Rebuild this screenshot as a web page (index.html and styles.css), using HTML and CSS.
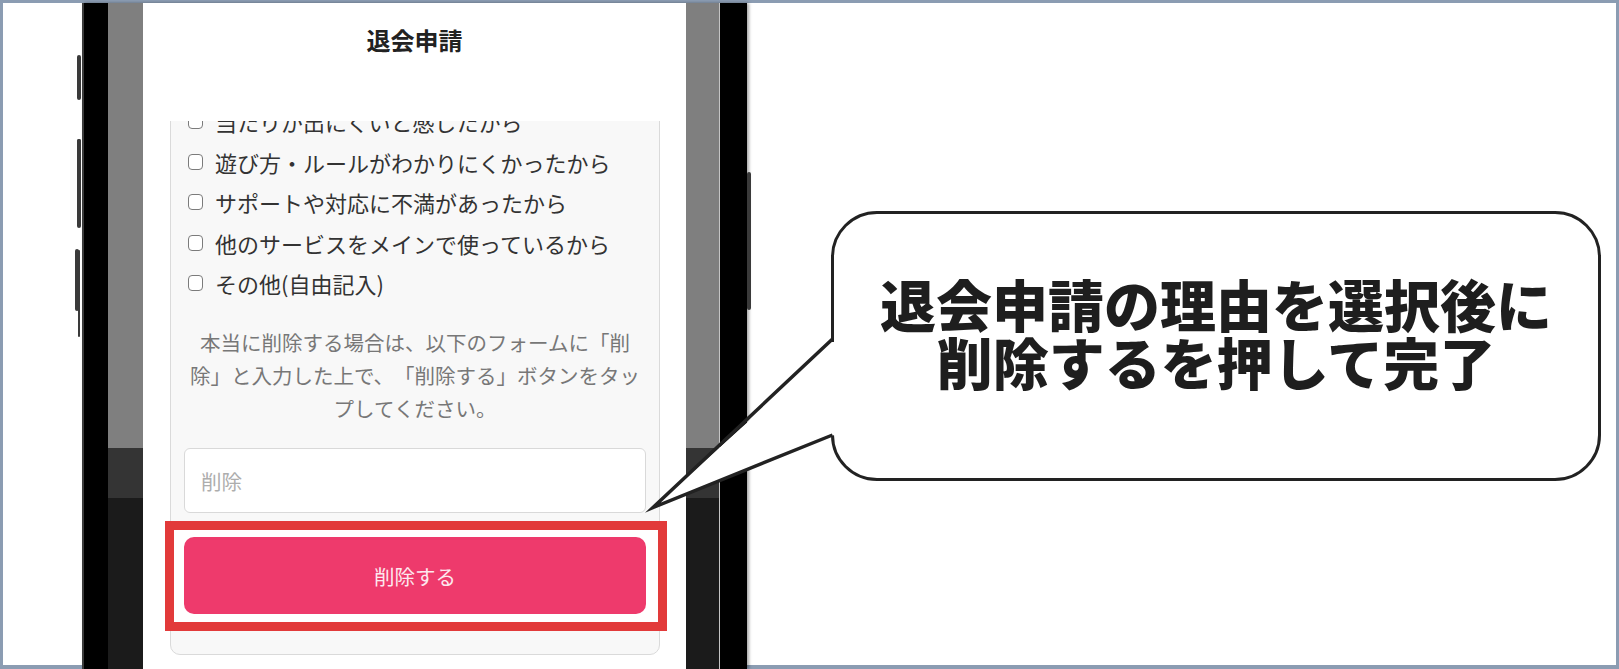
FILE: index.html
```html
<!DOCTYPE html>
<html lang="ja">
<head>
    <meta charset="UTF-8">
    <meta name="viewport" content="width=device-width, initial-scale=1.0">
    <title>退会申請</title>
    <link rel="stylesheet" href="styles.css">
</head>
<body>
    <div class="shot">
        <div class="phone">
            <div class="screen">
                <div class="sheet">
                    <header class="sheet-head">
                        <h1>退会申請</h1>
                    </header>
                    <div class="sheet-body">
                        <div class="card">
                            <ul class="reasons">
                                <li><span class="box"></span>当たりが出にくいと感じたから</li>
                                <li><span class="box"></span>遊び方・ルールがわかりにくかったから</li>
                                <li><span class="box"></span>サポートや対応に不満があったから</li>
                                <li><span class="box"></span>他のサービスをメインで使っているから</li>
                                <li><span class="box"></span>その他(自由記入)</li>
                            </ul>
                            <p class="note">本当に削除する場合は、以下のフォームに「削除」と入力した上で、「削除する」ボタンをタップしてください。</p>
                            <input class="confirm" type="text" placeholder="削除">
                            <div class="highlight">
                                <button class="delete" type="button">削除する</button>
                            </div>
                        </div>
                    </div>
                </div>
            </div>
        </div>

        <div class="callout">
            <div class="bubble">
                <p>退会申請の理由を選択後に<br>削除するを押して完了</p>
                <!-- tail pointing at the delete button -->
                <svg class="tail" width="190" height="185" viewBox="0 0 190 185">
                    <rect x="180" y="11" width="9" height="90" fill="#fff"/>
                    <polygon points="189,9.5 4,176.5 189,102.5" fill="#fff"/>
                    <polyline points="183.5,8 4,176.5 183.5,104" fill="none" stroke="#222" stroke-width="3.5" stroke-linejoin="miter" stroke-miterlimit="12"/>
                </svg>
            </div>
        </div>
    </div>
</body>
</html>
```

FILE: styles.css
```css
html, body {
    margin: 0;
    padding: 0;
    background: #fff;
    overflow: hidden;
}
body {
    font-family: "Noto Sans CJK JP", "Noto Sans", sans-serif;
}
.shot {
    box-sizing: border-box;
    width: 1619px;
    height: 669px;
    border: solid #8b9cb2;
    border-width: 3px 3px 4px 3px;
    background: #fff;
    display: flex;
    align-items: flex-start;
}

/* device */
.phone {
    position: relative;
    box-sizing: border-box;
    width: 665px;
    height: 666px;
    margin-left: 79px;
    display: flex;
    background: #000;
    border-left: 2px solid #3c3c3c;
    padding: 0 27px 0 24px;
    box-shadow: 2px 0 3px rgba(0, 0, 0, 0.35);
}
.phone::before {
    content: "";
    position: absolute;
    left: -7px;
    top: 52px;
    width: 4px;
    height: 45px;
    border-radius: 2px;
    background: #3a3a3a;
    box-shadow: 0 84px 0 0 #3a3a3a;
}
.phone::after {
    content: "";
    position: absolute;
    left: -7px;
    top: 136px;
    width: 4px;
    height: 89px;
    border-radius: 2px;
    background: #3a3a3a;
    box-shadow: 0 110px 0 -1px #3a3a3a;
}
.phone .screen::after {
    content: "";
    position: absolute;
    right: -32px;
    top: 169px;
    width: 4px;
    height: 138px;
    border-radius: 2px;
    background: #3a3a3a;
}
.phone .screen::before {
    content: "";
    position: absolute;
    left: -33px;
    top: 246px;
    width: 4px;
    height: 62px;
    border-radius: 2px;
    background: #3a3a3a;
}
.screen {
    position: relative;
    flex: 1;
    display: flex;
    padding: 0 33px 0 35px;
    border-right: 1px solid #c4c4c4;
    background: linear-gradient(to bottom, #7f7f7f 0, #7f7f7f 445px, #343434 445px, #343434 495px, #1b1b1b 495px);
}

/* modal sheet */
.sheet {
    flex: 1;
    display: flex;
    flex-direction: column;
    background: #fff;
    min-width: 0;
}
.sheet-head {
    height: 118px;
    flex: none;
    text-align: center;
}
.sheet-head h1 {
    margin: 0;
    padding-top: 23px;
    font-size: 24px;
    line-height: 28px;
    font-weight: 700;
    color: #222;
}
.sheet-body {
    flex: 1;
    overflow: hidden;
    padding: 0 26px 0 27px;
}
.card {
    margin-top: -21px;
    border: 1px solid #dadada;
    border-radius: 10px;
    background: #f8f8f8;
    padding: 0 13px 23px;
}
.reasons {
    list-style: none;
    margin: 0;
    padding: 0;
}
.reasons li {
    height: 40.5px;
    display: flex;
    align-items: center;
    gap: 12px;
    padding-left: 4px;
    font-size: 22px;
    color: #333;
    white-space: nowrap;
}
.box {
    box-sizing: border-box;
    width: 15px;
    height: 16px;
    flex: none;
    border: 1.8px solid #7b7b7b;
    border-radius: 4px;
    background: #fff;
}
.note {
    margin: 22px 0 0;
    font-size: 20.5px;
    line-height: 33px;
    color: #777;
    text-align: center;
    text-spacing-trim: space-all;
}
.confirm {
    display: block;
    box-sizing: border-box;
    width: 100%;
    height: 65px;
    margin-top: 23.5px;
    padding: 0 16px;
    border: 1px solid #d9d9d9;
    border-radius: 6px;
    background: #fff;
    font-family: inherit;
    font-size: 20.5px;
    color: #333;
    outline: none;
}
.confirm::placeholder {
    color: #adadad;
}
.highlight {
    margin: 8px -21px 0 -19px;
    border: 9px solid #e23a3a;
    background: #fff;
    padding: 7px 12px 8px 10px;
}
.delete {
    display: block;
    width: 100%;
    height: 77px;
    border: none;
    border-radius: 10px;
    background: #ee3a6c;
    color: #fde8ee;
    font-family: inherit;
    font-size: 20.5px;
}

/* speech bubble */
.callout {
    margin: 208px 0 0 84px;
}
.bubble {
    position: relative;
    box-sizing: border-box;
    width: 770px;
    height: 270px;
    border: 3.5px solid #222;
    border-radius: 46px;
    background: #fff;
    display: flex;
    align-items: center;
    justify-content: center;
    padding-bottom: 29px;
}
.bubble p {
    margin: 0;
    font-size: 56px;
    line-height: 58px;
    font-weight: 900;
    color: #1e1e1e;
    text-align: center;
    white-space: nowrap;
}
.tail {
    position: absolute;
    left: -185.5px;
    top: 117px;
    overflow: visible;
}
```
